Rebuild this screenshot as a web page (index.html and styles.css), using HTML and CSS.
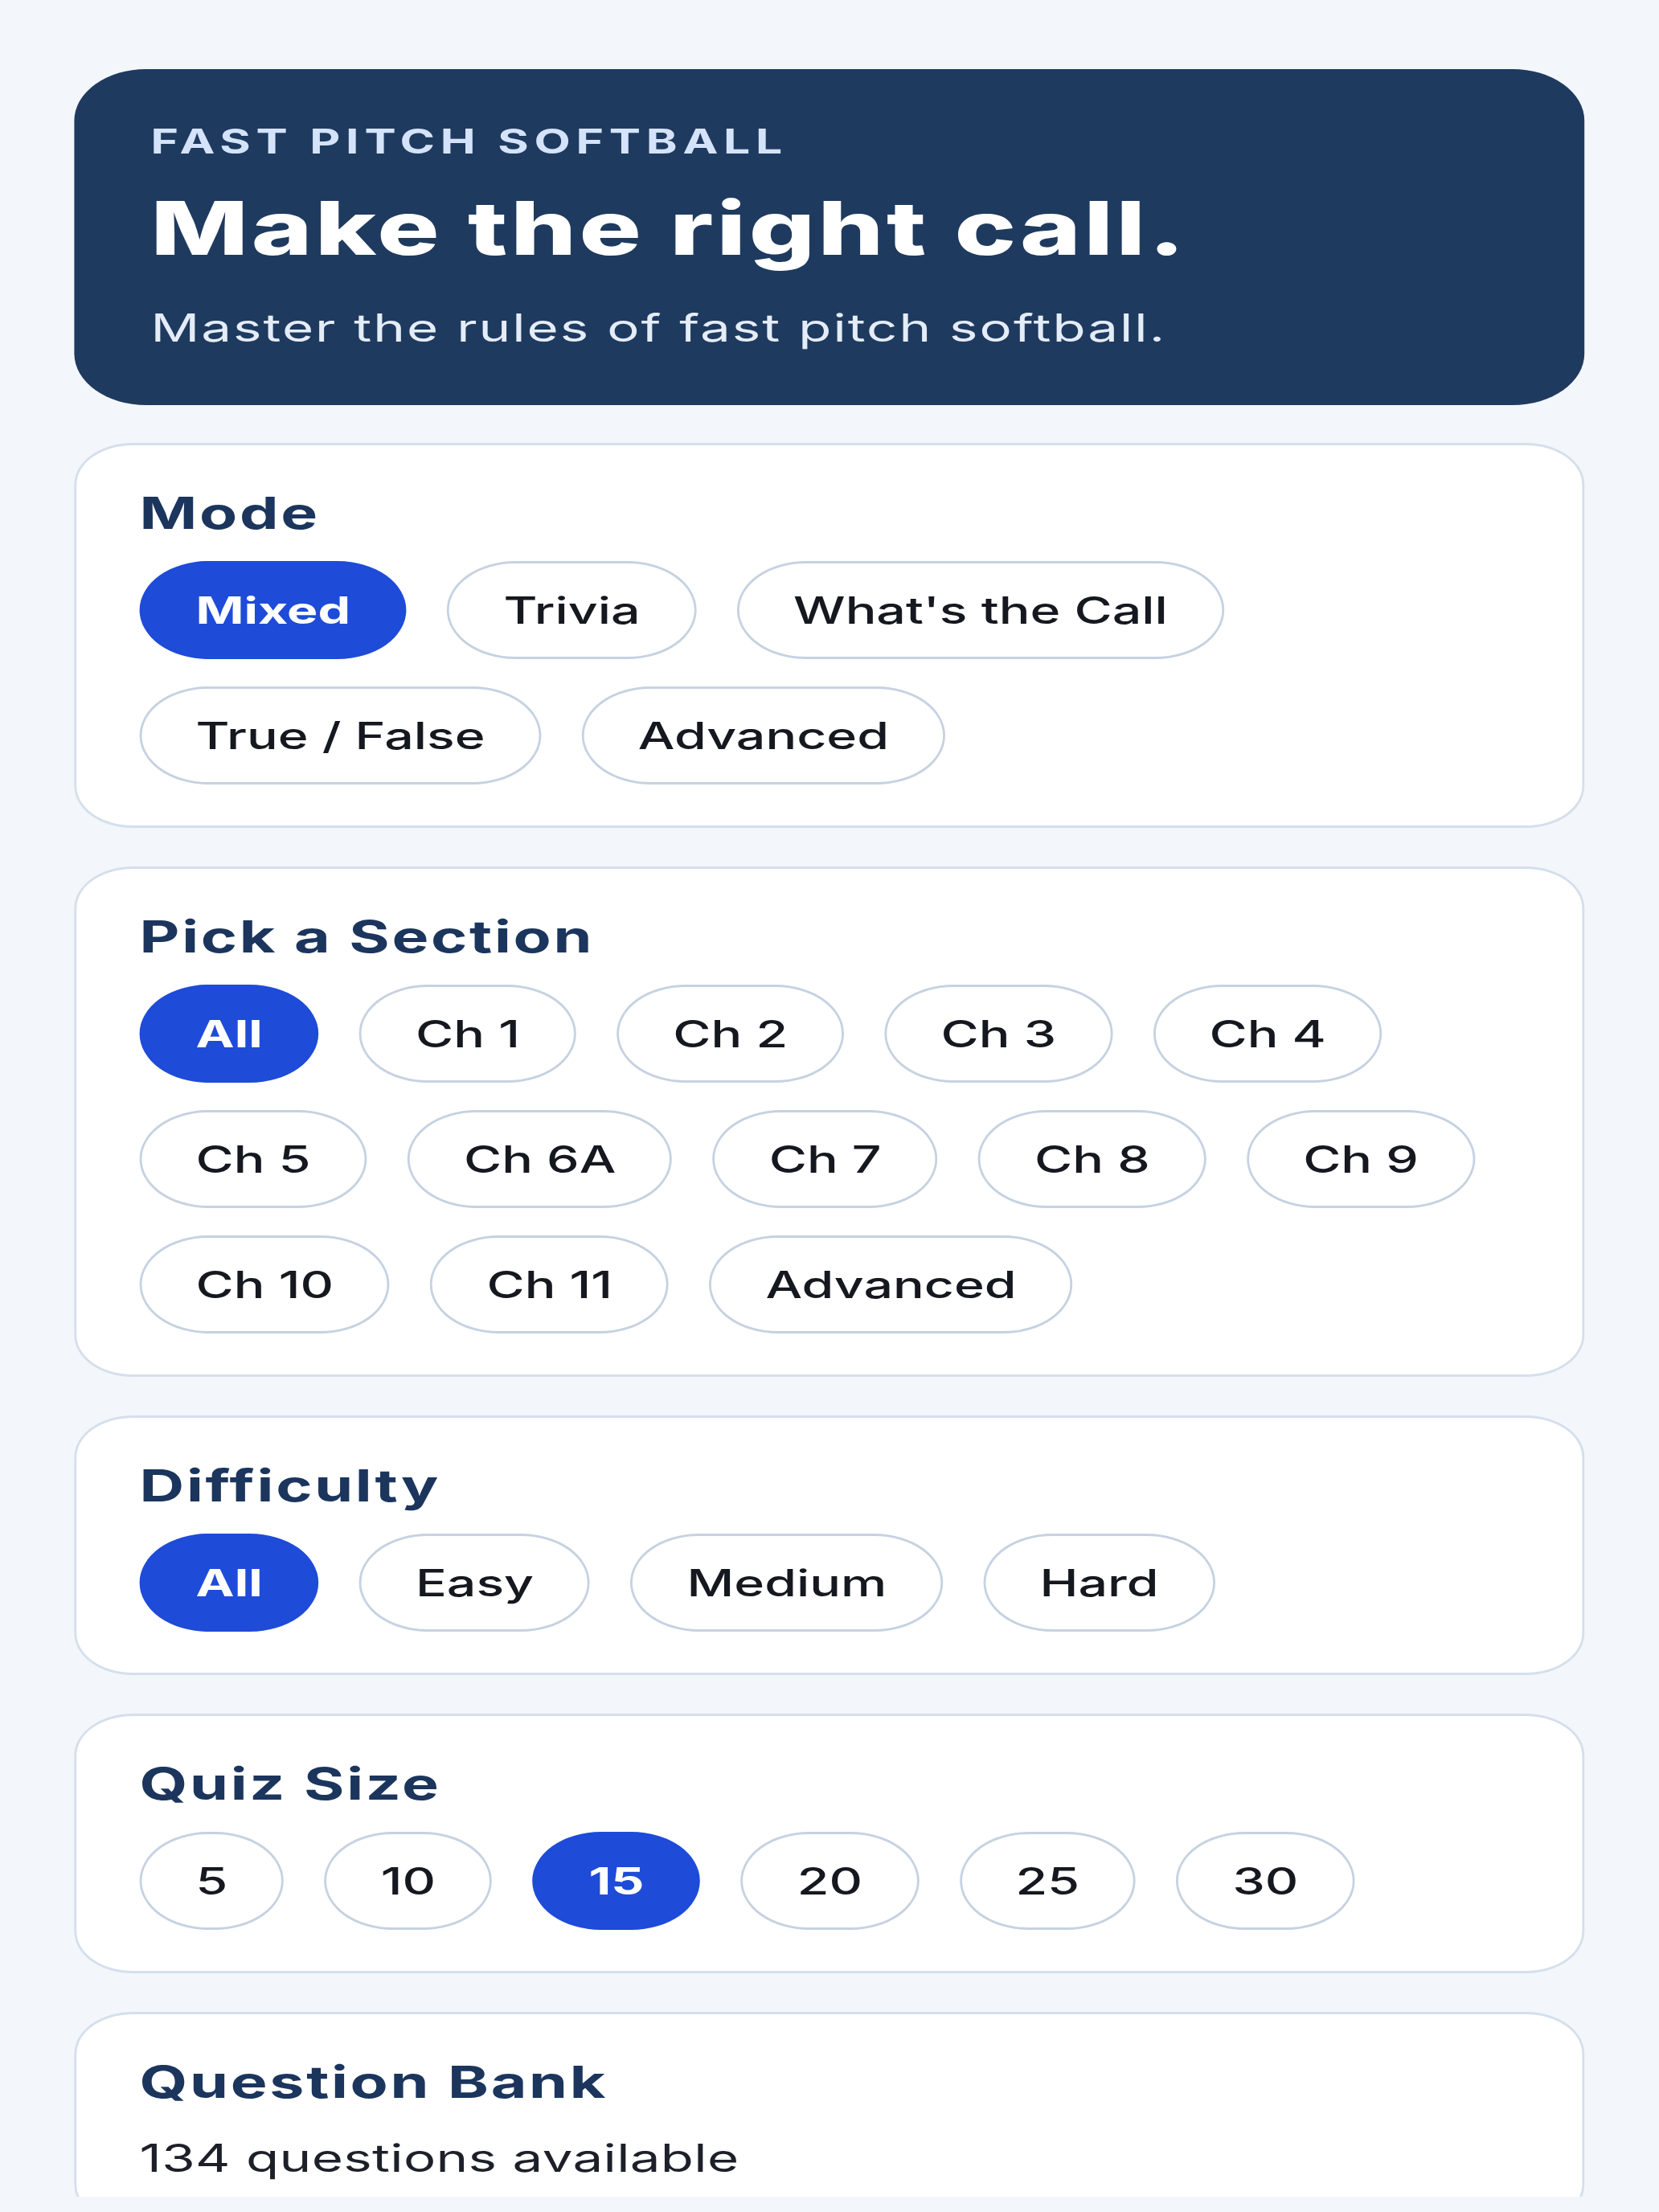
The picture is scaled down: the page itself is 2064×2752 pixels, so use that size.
FILE: index.html
```html
<!DOCTYPE html>
<html lang="en">
<head>
  <meta charset="UTF-8" />
  <meta name="viewport" content="width=device-width, initial-scale=1" />
  <title>Fast Pitch Softball - Rules Quiz</title>
  <link rel="stylesheet" href="styles.css">
</head>
<body>
  <div class="screen">
    <div class="app">
      <header class="hero">
        <p class="eyebrow">Fast Pitch Softball</p>
        <h1>Make the right call.</h1>
        <p class="tagline">Master the rules of fast pitch softball.</p>
      </header>

      <section class="panel">
        <h2>Mode</h2>
        <div class="chips">
          <button class="chip active">Mixed</button>
          <button class="chip">Trivia</button>
          <button class="chip">What's the Call</button>
          <button class="chip">True / False</button>
          <button class="chip">Advanced</button>
        </div>
      </section>

      <section class="panel">
        <h2>Pick a Section</h2>
        <div class="chips">
          <button class="chip active">All</button>
          <button class="chip">Ch 1</button>
          <button class="chip">Ch 2</button>
          <button class="chip">Ch 3</button>
          <button class="chip">Ch 4</button>
          <button class="chip">Ch 5</button>
          <button class="chip">Ch 6A</button>
          <button class="chip">Ch 7</button>
          <button class="chip">Ch 8</button>
          <button class="chip">Ch 9</button>
          <button class="chip">Ch 10</button>
          <button class="chip">Ch 11</button>
          <button class="chip">Advanced</button>
        </div>
      </section>

      <section class="panel">
        <h2>Difficulty</h2>
        <div class="chips">
          <button class="chip active">All</button>
          <button class="chip">Easy</button>
          <button class="chip">Medium</button>
          <button class="chip">Hard</button>
        </div>
      </section>

      <section class="panel">
        <h2>Quiz Size</h2>
        <div class="chips">
          <button class="chip">5</button>
          <button class="chip">10</button>
          <button class="chip active">15</button>
          <button class="chip">20</button>
          <button class="chip">25</button>
          <button class="chip">30</button>
        </div>
      </section>

      <section class="panel">
        <h2>Question Bank</h2>
        <p class="count">134 questions available</p>
      </section>
    </div>
  </div>
</body>
</html>
```

FILE: styles.css
```css
:root {
  --bg: #f3f6fb;
  --navy: #1f3a5f;
  --heading: #1b355d;
  --blue: #1e4bd8;
  --line: #d5dfec;
  --chip-line: #c6d2e1;
  --text: #15181f;
}

* {
  box-sizing: border-box;
}

body {
  margin: 0;
  background: var(--bg);
  font-family: Inter, "Noto Sans", sans-serif;
  color: var(--text);
}

/* the capture is stretched sideways, so the whole screen is too */
.screen {
  height: 2733px;
  overflow: hidden;
}

.app {
  width: 1474px;
  padding: 86px 66px 0;
  transform: scaleX(1.4);
  transform-origin: 0 0;
  display: flex;
  flex-direction: column;
  gap: 48px;
}

.hero {
  background: var(--navy);
  border-radius: 64px;
  padding: 65px 68px 66px;
  margin-bottom: -1px;
  color: #fff;
}

.eyebrow {
  margin: 0;
  font-size: 42px;
  line-height: 1.2;
  font-weight: 700;
  letter-spacing: 0.115em;
  text-transform: uppercase;
  color: #d4e3fa;
}

.hero h1 {
  margin: 32px 0 0;
  font-size: 92px;
  line-height: 1.1;
  font-weight: 800;
  letter-spacing: 0.028em;
}

.tagline {
  margin: 43px 0 0;
  font-size: 48px;
  line-height: 1.25;
  letter-spacing: 0.03em;
  color: #e4ecf7;
}

.panel {
  background: #fff;
  border: 3px solid var(--line);
  border-width: 3px 2px;
  border-radius: 52px;
  padding: 51px 56px 51px;
}

.panel h2 {
  margin: 0 0 27px;
  font-size: 55px;
  line-height: 1.2;
  font-weight: 700;
  letter-spacing: 0.035em;
  color: var(--heading);
}

.chips {
  display: flex;
  flex-wrap: wrap;
  gap: 34px 36px;
}

.chip {
  font-family: inherit;
  font-size: 46px;
  line-height: 56px;
  font-weight: 500;
  color: var(--text);
  background: #fff;
  border: solid var(--chip-line);
  border-width: 3px 2px;
  border-radius: 999px;
  padding: 30px 48px;
  cursor: pointer;
}

.chip.active {
  background: var(--blue);
  border-color: var(--blue);
  color: #fff;
  font-weight: 700;
}

.count {
  margin: 31px 0 0;
  font-size: 48px;
  line-height: 1.3;
  letter-spacing: 0.005em;
  color: #1d2029;
}
```
